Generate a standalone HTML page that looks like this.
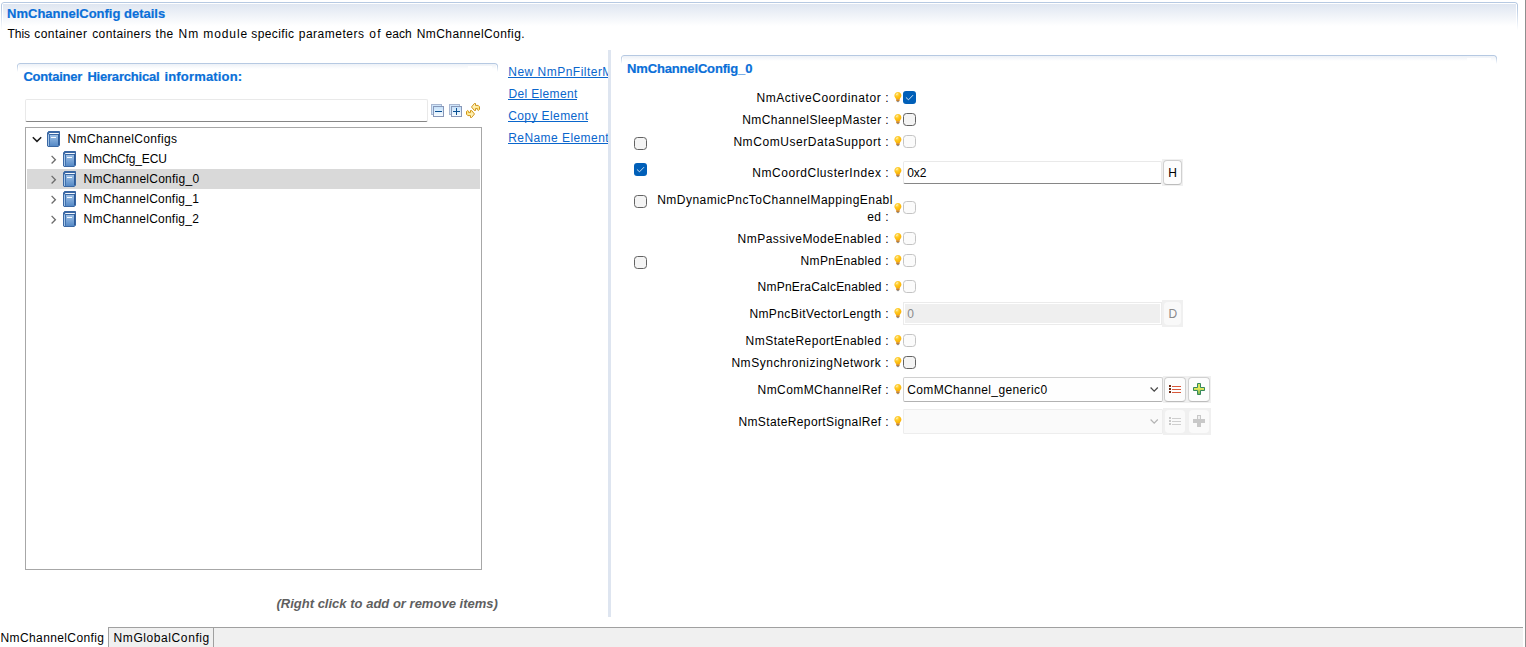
<!DOCTYPE html>
<html lang="en"><head><meta charset="utf-8"><title>NmChannelConfig details</title>
<style>
html,body{margin:0;padding:0;background:#fff;}
body{width:1526px;height:647px;overflow:hidden;position:relative;font-family:"Liberation Sans", sans-serif;font-size:12.0px;color:#000;}
.x{position:absolute;white-space:pre;line-height:16px;height:16px;margin:0;padding:0;}
.h{font-weight:bold;font-size:13.0px;color:#0a6fd8;-webkit-text-stroke:0.2px #0a6fd8;}
.t{color:#000;}
.dis{color:#8a8a8a;}
.a{color:#0a66cc;text-decoration:none;}
.hint{font-weight:bold;font-style:italic;font-size:13.0px;color:#5f5f5f;}
.para{margin:0;padding:0;position:static;}
.b{position:absolute;box-sizing:border-box;}
.i{position:absolute;display:block;overflow:visible;}

</style></head><body>
<div class="b" style="left:1525px;top:0;width:1px;height:647px;background:#8f8f8f"></div>
<div class="b" style="left:3px;top:4px;width:1513px;height:22px;background:linear-gradient(#dfe6f1,#ffffff)"></div>
<div class="b" style="left:1px;top:2px;width:1517px;height:28px;border:1px solid #b6c9e2;border-bottom:none;border-radius:3px 3px 0 0;-webkit-mask-image:linear-gradient(#000 0,#000 20%,transparent 100%);mask-image:linear-gradient(#000 0,#000 20%,transparent 100%)"></div>
<div class="b" style="left:19px;top:64px;width:477px;height:5px;background:linear-gradient(#edf1f7,#ffffff)"></div>
<div class="b" style="left:17px;top:63px;width:481px;height:9px;border:1px solid #b6c9e2;border-bottom:none;border-radius:3px 3px 0 0;-webkit-mask-image:linear-gradient(#000 0,#000 25%,transparent 100%);mask-image:linear-gradient(#000 0,#000 25%,transparent 100%)"></div>
<div class="b" style="left:468px;top:66px;width:24px;height:3px;background:#fff"></div>
<div class="b" style="left:25px;top:99px;width:403px;height:23px;border:1px solid #e9e9e9;border-bottom:1px solid #868686;border-radius:2px;background:#fff"></div>
<svg class="i" style="left:431px;top:104px" width="13" height="13" viewBox="0 0 13 13" shape-rendering="crispEdges"><defs><linearGradient id="ci431" x1="0" y1="0" x2="0" y2="1"><stop offset="0" stop-color="#c3e0fa"/><stop offset="1" stop-color="#fafdff"/></linearGradient></defs><rect x="0.5" y="0.5" width="10" height="10" fill="#cfe6fb" stroke="#a9b7d1"/><rect x="2.5" y="2.5" width="10" height="10" fill="url(#ci431)" stroke="#8797b8"/><rect x="4" y="7" width="7" height="1" fill="#0a4f92"/></svg>
<svg class="i" style="left:449px;top:104px" width="13" height="13" viewBox="0 0 13 13" shape-rendering="crispEdges"><defs><linearGradient id="ci449" x1="0" y1="0" x2="0" y2="1"><stop offset="0" stop-color="#c3e0fa"/><stop offset="1" stop-color="#fafdff"/></linearGradient></defs><rect x="0.5" y="0.5" width="10" height="10" fill="#cfe6fb" stroke="#a9b7d1"/><rect x="2.5" y="2.5" width="10" height="10" fill="url(#ci449)" stroke="#8797b8"/><rect x="4" y="7" width="7" height="1" fill="#0a4f92"/><rect x="7" y="4" width="1" height="7" fill="#0a4f92"/></svg>
<svg class="i" style="left:465px;top:102px" width="16" height="17" viewBox="0 0 16 17"><defs><linearGradient id="rf" x1="0" y1="0" x2="1" y2="1"><stop offset="0" stop-color="#fffbe0"/><stop offset="1" stop-color="#ffdf6a"/></linearGradient></defs><g fill="url(#rf)" stroke="#c98a06" stroke-width="0.9" stroke-linejoin="miter"><path d="M6.5 5 L9.4 1.5 L10.5 1.5 L10.5 3.4 L13.2 3.4 L14.5 4.8 L14.5 7.4 L13.4 8.5 L12.4 7.6 L12.4 6.6 L10.5 6.6 L10.5 8.5 L9.4 8.5 Z"/><path d="M6.5 5 L9.4 1.5 L10.5 1.5 L10.5 3.4 L13.2 3.4 L14.5 4.8 L14.5 7.4 L13.4 8.5 L12.4 7.6 L12.4 6.6 L10.5 6.6 L10.5 8.5 L9.4 8.5 Z" transform="rotate(180 8 8.5)"/></g></svg>
<div class="b" style="left:25px;top:127px;width:457px;height:443px;border:1px solid #a7a7a7;background:#fff"></div>
<div class="b" style="left:27px;top:169px;width:453px;height:20px;background:#d9d9d9"></div>
<svg class="i" style="left:32.3px;top:135.9px" width="10" height="7" viewBox="0 0 10 7"><path d="M0.8 1.2 L5 5.4 L9.2 1.2" fill="none" stroke="#1c1c1c" stroke-width="1.5"/></svg>
<svg class="i" style="left:47px;top:131px" width="13" height="16" viewBox="0 0 13 16"><defs><linearGradient id="bk47_131" x1="0" y1="0" x2="0" y2="1"><stop offset="0" stop-color="#9dc0e6"/><stop offset="1" stop-color="#5589c6"/></linearGradient></defs><path d="M1.6 0.5 H12.5 V14.2 L11.3 15.5 H1 L0.5 15 V1.8 Z" fill="#6a98cd" stroke="#3b68a4" stroke-width="1"/><rect x="1" y="2" width="11" height="2" fill="#3a67a3"/><rect x="1" y="0.6" width="11.4" height="1.6" fill="#3b68a4"/><rect x="3" y="4" width="8" height="11" fill="url(#bk47_131)"/><rect x="1" y="3.4" width="1" height="11.4" fill="#a5c6e8"/><rect x="2" y="3.4" width="1" height="11.4" fill="#3f70ae"/><rect x="2.2" y="2" width="9.6" height="1" fill="#f6f9fd"/><rect x="4" y="6" width="5" height="1" fill="#f6f9fd"/><rect x="11" y="3" width="1.2" height="11.4" fill="#2f5c98"/></svg>
<svg class="i" style="left:50px;top:154.8px" width="7" height="10" viewBox="0 0 7 10"><path d="M1.6 0.9 L5.4 4.7 L1.6 8.5" fill="none" stroke="#6c6c6c" stroke-width="1.3"/></svg>
<svg class="i" style="left:63px;top:151px" width="13" height="16" viewBox="0 0 13 16"><defs><linearGradient id="bk63_151" x1="0" y1="0" x2="0" y2="1"><stop offset="0" stop-color="#9dc0e6"/><stop offset="1" stop-color="#5589c6"/></linearGradient></defs><path d="M1.6 0.5 H12.5 V14.2 L11.3 15.5 H1 L0.5 15 V1.8 Z" fill="#6a98cd" stroke="#3b68a4" stroke-width="1"/><rect x="1" y="2" width="11" height="2" fill="#3a67a3"/><rect x="1" y="0.6" width="11.4" height="1.6" fill="#3b68a4"/><rect x="3" y="4" width="8" height="11" fill="url(#bk63_151)"/><rect x="1" y="3.4" width="1" height="11.4" fill="#a5c6e8"/><rect x="2" y="3.4" width="1" height="11.4" fill="#3f70ae"/><rect x="2.2" y="2" width="9.6" height="1" fill="#f6f9fd"/><rect x="4" y="6" width="5" height="1" fill="#f6f9fd"/><rect x="11" y="3" width="1.2" height="11.4" fill="#2f5c98"/></svg>
<svg class="i" style="left:50px;top:174.8px" width="7" height="10" viewBox="0 0 7 10"><path d="M1.6 0.9 L5.4 4.7 L1.6 8.5" fill="none" stroke="#6c6c6c" stroke-width="1.3"/></svg>
<svg class="i" style="left:63px;top:171px" width="13" height="16" viewBox="0 0 13 16"><defs><linearGradient id="bk63_171" x1="0" y1="0" x2="0" y2="1"><stop offset="0" stop-color="#9dc0e6"/><stop offset="1" stop-color="#5589c6"/></linearGradient></defs><path d="M1.6 0.5 H12.5 V14.2 L11.3 15.5 H1 L0.5 15 V1.8 Z" fill="#6a98cd" stroke="#3b68a4" stroke-width="1"/><rect x="1" y="2" width="11" height="2" fill="#3a67a3"/><rect x="1" y="0.6" width="11.4" height="1.6" fill="#3b68a4"/><rect x="3" y="4" width="8" height="11" fill="url(#bk63_171)"/><rect x="1" y="3.4" width="1" height="11.4" fill="#a5c6e8"/><rect x="2" y="3.4" width="1" height="11.4" fill="#3f70ae"/><rect x="2.2" y="2" width="9.6" height="1" fill="#f6f9fd"/><rect x="4" y="6" width="5" height="1" fill="#f6f9fd"/><rect x="11" y="3" width="1.2" height="11.4" fill="#2f5c98"/></svg>
<svg class="i" style="left:50px;top:194.8px" width="7" height="10" viewBox="0 0 7 10"><path d="M1.6 0.9 L5.4 4.7 L1.6 8.5" fill="none" stroke="#6c6c6c" stroke-width="1.3"/></svg>
<svg class="i" style="left:63px;top:191px" width="13" height="16" viewBox="0 0 13 16"><defs><linearGradient id="bk63_191" x1="0" y1="0" x2="0" y2="1"><stop offset="0" stop-color="#9dc0e6"/><stop offset="1" stop-color="#5589c6"/></linearGradient></defs><path d="M1.6 0.5 H12.5 V14.2 L11.3 15.5 H1 L0.5 15 V1.8 Z" fill="#6a98cd" stroke="#3b68a4" stroke-width="1"/><rect x="1" y="2" width="11" height="2" fill="#3a67a3"/><rect x="1" y="0.6" width="11.4" height="1.6" fill="#3b68a4"/><rect x="3" y="4" width="8" height="11" fill="url(#bk63_191)"/><rect x="1" y="3.4" width="1" height="11.4" fill="#a5c6e8"/><rect x="2" y="3.4" width="1" height="11.4" fill="#3f70ae"/><rect x="2.2" y="2" width="9.6" height="1" fill="#f6f9fd"/><rect x="4" y="6" width="5" height="1" fill="#f6f9fd"/><rect x="11" y="3" width="1.2" height="11.4" fill="#2f5c98"/></svg>
<svg class="i" style="left:50px;top:214.8px" width="7" height="10" viewBox="0 0 7 10"><path d="M1.6 0.9 L5.4 4.7 L1.6 8.5" fill="none" stroke="#6c6c6c" stroke-width="1.3"/></svg>
<svg class="i" style="left:63px;top:211px" width="13" height="16" viewBox="0 0 13 16"><defs><linearGradient id="bk63_211" x1="0" y1="0" x2="0" y2="1"><stop offset="0" stop-color="#9dc0e6"/><stop offset="1" stop-color="#5589c6"/></linearGradient></defs><path d="M1.6 0.5 H12.5 V14.2 L11.3 15.5 H1 L0.5 15 V1.8 Z" fill="#6a98cd" stroke="#3b68a4" stroke-width="1"/><rect x="1" y="2" width="11" height="2" fill="#3a67a3"/><rect x="1" y="0.6" width="11.4" height="1.6" fill="#3b68a4"/><rect x="3" y="4" width="8" height="11" fill="url(#bk63_211)"/><rect x="1" y="3.4" width="1" height="11.4" fill="#a5c6e8"/><rect x="2" y="3.4" width="1" height="11.4" fill="#3f70ae"/><rect x="2.2" y="2" width="9.6" height="1" fill="#f6f9fd"/><rect x="4" y="6" width="5" height="1" fill="#f6f9fd"/><rect x="11" y="3" width="1.2" height="11.4" fill="#2f5c98"/></svg>
<div class="b" style="left:608px;top:50px;width:3px;height:567px;background:#dee5f0"></div>
<div class="b" style="left:623px;top:56px;width:873px;height:5px;background:linear-gradient(#edf1f7,#ffffff)"></div>
<div class="b" style="left:621px;top:55px;width:876px;height:9px;border:1px solid #b6c9e2;border-bottom:none;border-radius:3px 3px 0 0;-webkit-mask-image:linear-gradient(#000 0,#000 25%,transparent 100%);mask-image:linear-gradient(#000 0,#000 25%,transparent 100%)"></div>
<div class="b" style="left:1467px;top:58px;width:24px;height:3px;background:#fff"></div>
<svg class="i" style="left:894px;top:92px" width="8" height="11" viewBox="0 0 8 11"><defs><radialGradient id="bg894_92" cx="0.38" cy="0.28" r="0.75"><stop offset="0" stop-color="#ffe27a"/><stop offset="0.45" stop-color="#ffc71c"/><stop offset="1" stop-color="#f9ab00"/></radialGradient></defs><path d="M3.9 0.1 C1.9 0.1 0.4 1.7 0.4 3.6 C0.4 5 1.3 5.8 2 6.9 L2.2 7.6 L5.6 7.6 L5.8 6.9 C6.5 5.8 7.4 5 7.4 3.6 C7.4 1.7 5.9 0.1 3.9 0.1 Z" fill="url(#bg894_92)"/><path d="M2.5 2.9 L3.5 1.7" stroke="#fff6cf" stroke-width="0.8" stroke-linecap="round"/><rect x="2.2" y="7.3" width="3.4" height="1.9" fill="#c9822a"/><rect x="2.9" y="9.1" width="2" height="1" fill="#8a8a8a"/></svg>
<svg class="i" style="left:903px;top:91px" width="13" height="13" viewBox="0 0 13 13"><rect x="0" y="0" width="13" height="13" rx="3" fill="#005fb8"/><path d="M3.2 6.7 L5.5 8.8 L9.8 4.4" fill="none" stroke="#fff" stroke-opacity="0.92" stroke-width="0.85" stroke-linecap="round" stroke-linejoin="round"/></svg>
<svg class="i" style="left:894px;top:114px" width="8" height="11" viewBox="0 0 8 11"><defs><radialGradient id="bg894_114" cx="0.38" cy="0.28" r="0.75"><stop offset="0" stop-color="#ffe27a"/><stop offset="0.45" stop-color="#ffc71c"/><stop offset="1" stop-color="#f9ab00"/></radialGradient></defs><path d="M3.9 0.1 C1.9 0.1 0.4 1.7 0.4 3.6 C0.4 5 1.3 5.8 2 6.9 L2.2 7.6 L5.6 7.6 L5.8 6.9 C6.5 5.8 7.4 5 7.4 3.6 C7.4 1.7 5.9 0.1 3.9 0.1 Z" fill="url(#bg894_114)"/><path d="M2.5 2.9 L3.5 1.7" stroke="#fff6cf" stroke-width="0.8" stroke-linecap="round"/><rect x="2.2" y="7.3" width="3.4" height="1.9" fill="#c9822a"/><rect x="2.9" y="9.1" width="2" height="1" fill="#8a8a8a"/></svg>
<svg class="i" style="left:903px;top:113px" width="13" height="13" viewBox="0 0 13 13"><rect x="0.5" y="0.5" width="12" height="12" rx="3" fill="#f4f4f4" stroke="#626262"/></svg>
<svg class="i" style="left:894px;top:136px" width="8" height="11" viewBox="0 0 8 11"><defs><radialGradient id="bg894_136" cx="0.38" cy="0.28" r="0.75"><stop offset="0" stop-color="#ffe27a"/><stop offset="0.45" stop-color="#ffc71c"/><stop offset="1" stop-color="#f9ab00"/></radialGradient></defs><path d="M3.9 0.1 C1.9 0.1 0.4 1.7 0.4 3.6 C0.4 5 1.3 5.8 2 6.9 L2.2 7.6 L5.6 7.6 L5.8 6.9 C6.5 5.8 7.4 5 7.4 3.6 C7.4 1.7 5.9 0.1 3.9 0.1 Z" fill="url(#bg894_136)"/><path d="M2.5 2.9 L3.5 1.7" stroke="#fff6cf" stroke-width="0.8" stroke-linecap="round"/><rect x="2.2" y="7.3" width="3.4" height="1.9" fill="#c9822a"/><rect x="2.9" y="9.1" width="2" height="1" fill="#8a8a8a"/></svg>
<svg class="i" style="left:903px;top:135px" width="13" height="13" viewBox="0 0 13 13"><rect x="0.5" y="0.5" width="12" height="12" rx="3" fill="#fbfbfb" stroke="#c4c4c4"/></svg>
<svg class="i" style="left:894px;top:203px" width="8" height="11" viewBox="0 0 8 11"><defs><radialGradient id="bg894_203" cx="0.38" cy="0.28" r="0.75"><stop offset="0" stop-color="#ffe27a"/><stop offset="0.45" stop-color="#ffc71c"/><stop offset="1" stop-color="#f9ab00"/></radialGradient></defs><path d="M3.9 0.1 C1.9 0.1 0.4 1.7 0.4 3.6 C0.4 5 1.3 5.8 2 6.9 L2.2 7.6 L5.6 7.6 L5.8 6.9 C6.5 5.8 7.4 5 7.4 3.6 C7.4 1.7 5.9 0.1 3.9 0.1 Z" fill="url(#bg894_203)"/><path d="M2.5 2.9 L3.5 1.7" stroke="#fff6cf" stroke-width="0.8" stroke-linecap="round"/><rect x="2.2" y="7.3" width="3.4" height="1.9" fill="#c9822a"/><rect x="2.9" y="9.1" width="2" height="1" fill="#8a8a8a"/></svg>
<svg class="i" style="left:903px;top:201px" width="13" height="13" viewBox="0 0 13 13"><rect x="0.5" y="0.5" width="12" height="12" rx="3" fill="#fbfbfb" stroke="#c4c4c4"/></svg>
<svg class="i" style="left:894px;top:233px" width="8" height="11" viewBox="0 0 8 11"><defs><radialGradient id="bg894_233" cx="0.38" cy="0.28" r="0.75"><stop offset="0" stop-color="#ffe27a"/><stop offset="0.45" stop-color="#ffc71c"/><stop offset="1" stop-color="#f9ab00"/></radialGradient></defs><path d="M3.9 0.1 C1.9 0.1 0.4 1.7 0.4 3.6 C0.4 5 1.3 5.8 2 6.9 L2.2 7.6 L5.6 7.6 L5.8 6.9 C6.5 5.8 7.4 5 7.4 3.6 C7.4 1.7 5.9 0.1 3.9 0.1 Z" fill="url(#bg894_233)"/><path d="M2.5 2.9 L3.5 1.7" stroke="#fff6cf" stroke-width="0.8" stroke-linecap="round"/><rect x="2.2" y="7.3" width="3.4" height="1.9" fill="#c9822a"/><rect x="2.9" y="9.1" width="2" height="1" fill="#8a8a8a"/></svg>
<svg class="i" style="left:903px;top:232px" width="13" height="13" viewBox="0 0 13 13"><rect x="0.5" y="0.5" width="12" height="12" rx="3" fill="#fbfbfb" stroke="#c4c4c4"/></svg>
<svg class="i" style="left:894px;top:255px" width="8" height="11" viewBox="0 0 8 11"><defs><radialGradient id="bg894_255" cx="0.38" cy="0.28" r="0.75"><stop offset="0" stop-color="#ffe27a"/><stop offset="0.45" stop-color="#ffc71c"/><stop offset="1" stop-color="#f9ab00"/></radialGradient></defs><path d="M3.9 0.1 C1.9 0.1 0.4 1.7 0.4 3.6 C0.4 5 1.3 5.8 2 6.9 L2.2 7.6 L5.6 7.6 L5.8 6.9 C6.5 5.8 7.4 5 7.4 3.6 C7.4 1.7 5.9 0.1 3.9 0.1 Z" fill="url(#bg894_255)"/><path d="M2.5 2.9 L3.5 1.7" stroke="#fff6cf" stroke-width="0.8" stroke-linecap="round"/><rect x="2.2" y="7.3" width="3.4" height="1.9" fill="#c9822a"/><rect x="2.9" y="9.1" width="2" height="1" fill="#8a8a8a"/></svg>
<svg class="i" style="left:903px;top:254px" width="13" height="13" viewBox="0 0 13 13"><rect x="0.5" y="0.5" width="12" height="12" rx="3" fill="#fbfbfb" stroke="#c4c4c4"/></svg>
<svg class="i" style="left:894px;top:281px" width="8" height="11" viewBox="0 0 8 11"><defs><radialGradient id="bg894_281" cx="0.38" cy="0.28" r="0.75"><stop offset="0" stop-color="#ffe27a"/><stop offset="0.45" stop-color="#ffc71c"/><stop offset="1" stop-color="#f9ab00"/></radialGradient></defs><path d="M3.9 0.1 C1.9 0.1 0.4 1.7 0.4 3.6 C0.4 5 1.3 5.8 2 6.9 L2.2 7.6 L5.6 7.6 L5.8 6.9 C6.5 5.8 7.4 5 7.4 3.6 C7.4 1.7 5.9 0.1 3.9 0.1 Z" fill="url(#bg894_281)"/><path d="M2.5 2.9 L3.5 1.7" stroke="#fff6cf" stroke-width="0.8" stroke-linecap="round"/><rect x="2.2" y="7.3" width="3.4" height="1.9" fill="#c9822a"/><rect x="2.9" y="9.1" width="2" height="1" fill="#8a8a8a"/></svg>
<svg class="i" style="left:903px;top:280px" width="13" height="13" viewBox="0 0 13 13"><rect x="0.5" y="0.5" width="12" height="12" rx="3" fill="#fbfbfb" stroke="#c4c4c4"/></svg>
<svg class="i" style="left:894px;top:335px" width="8" height="11" viewBox="0 0 8 11"><defs><radialGradient id="bg894_335" cx="0.38" cy="0.28" r="0.75"><stop offset="0" stop-color="#ffe27a"/><stop offset="0.45" stop-color="#ffc71c"/><stop offset="1" stop-color="#f9ab00"/></radialGradient></defs><path d="M3.9 0.1 C1.9 0.1 0.4 1.7 0.4 3.6 C0.4 5 1.3 5.8 2 6.9 L2.2 7.6 L5.6 7.6 L5.8 6.9 C6.5 5.8 7.4 5 7.4 3.6 C7.4 1.7 5.9 0.1 3.9 0.1 Z" fill="url(#bg894_335)"/><path d="M2.5 2.9 L3.5 1.7" stroke="#fff6cf" stroke-width="0.8" stroke-linecap="round"/><rect x="2.2" y="7.3" width="3.4" height="1.9" fill="#c9822a"/><rect x="2.9" y="9.1" width="2" height="1" fill="#8a8a8a"/></svg>
<svg class="i" style="left:903px;top:334px" width="13" height="13" viewBox="0 0 13 13"><rect x="0.5" y="0.5" width="12" height="12" rx="3" fill="#fbfbfb" stroke="#c4c4c4"/></svg>
<svg class="i" style="left:894px;top:357px" width="8" height="11" viewBox="0 0 8 11"><defs><radialGradient id="bg894_357" cx="0.38" cy="0.28" r="0.75"><stop offset="0" stop-color="#ffe27a"/><stop offset="0.45" stop-color="#ffc71c"/><stop offset="1" stop-color="#f9ab00"/></radialGradient></defs><path d="M3.9 0.1 C1.9 0.1 0.4 1.7 0.4 3.6 C0.4 5 1.3 5.8 2 6.9 L2.2 7.6 L5.6 7.6 L5.8 6.9 C6.5 5.8 7.4 5 7.4 3.6 C7.4 1.7 5.9 0.1 3.9 0.1 Z" fill="url(#bg894_357)"/><path d="M2.5 2.9 L3.5 1.7" stroke="#fff6cf" stroke-width="0.8" stroke-linecap="round"/><rect x="2.2" y="7.3" width="3.4" height="1.9" fill="#c9822a"/><rect x="2.9" y="9.1" width="2" height="1" fill="#8a8a8a"/></svg>
<svg class="i" style="left:903px;top:356px" width="13" height="13" viewBox="0 0 13 13"><rect x="0.5" y="0.5" width="12" height="12" rx="3" fill="#f4f4f4" stroke="#626262"/></svg>
<svg class="i" style="left:894px;top:167px" width="8" height="11" viewBox="0 0 8 11"><defs><radialGradient id="bg894_167" cx="0.38" cy="0.28" r="0.75"><stop offset="0" stop-color="#ffe27a"/><stop offset="0.45" stop-color="#ffc71c"/><stop offset="1" stop-color="#f9ab00"/></radialGradient></defs><path d="M3.9 0.1 C1.9 0.1 0.4 1.7 0.4 3.6 C0.4 5 1.3 5.8 2 6.9 L2.2 7.6 L5.6 7.6 L5.8 6.9 C6.5 5.8 7.4 5 7.4 3.6 C7.4 1.7 5.9 0.1 3.9 0.1 Z" fill="url(#bg894_167)"/><path d="M2.5 2.9 L3.5 1.7" stroke="#fff6cf" stroke-width="0.8" stroke-linecap="round"/><rect x="2.2" y="7.3" width="3.4" height="1.9" fill="#c9822a"/><rect x="2.9" y="9.1" width="2" height="1" fill="#8a8a8a"/></svg>
<svg class="i" style="left:894px;top:308px" width="8" height="11" viewBox="0 0 8 11"><defs><radialGradient id="bg894_308" cx="0.38" cy="0.28" r="0.75"><stop offset="0" stop-color="#ffe27a"/><stop offset="0.45" stop-color="#ffc71c"/><stop offset="1" stop-color="#f9ab00"/></radialGradient></defs><path d="M3.9 0.1 C1.9 0.1 0.4 1.7 0.4 3.6 C0.4 5 1.3 5.8 2 6.9 L2.2 7.6 L5.6 7.6 L5.8 6.9 C6.5 5.8 7.4 5 7.4 3.6 C7.4 1.7 5.9 0.1 3.9 0.1 Z" fill="url(#bg894_308)"/><path d="M2.5 2.9 L3.5 1.7" stroke="#fff6cf" stroke-width="0.8" stroke-linecap="round"/><rect x="2.2" y="7.3" width="3.4" height="1.9" fill="#c9822a"/><rect x="2.9" y="9.1" width="2" height="1" fill="#8a8a8a"/></svg>
<svg class="i" style="left:894px;top:384px" width="8" height="11" viewBox="0 0 8 11"><defs><radialGradient id="bg894_384" cx="0.38" cy="0.28" r="0.75"><stop offset="0" stop-color="#ffe27a"/><stop offset="0.45" stop-color="#ffc71c"/><stop offset="1" stop-color="#f9ab00"/></radialGradient></defs><path d="M3.9 0.1 C1.9 0.1 0.4 1.7 0.4 3.6 C0.4 5 1.3 5.8 2 6.9 L2.2 7.6 L5.6 7.6 L5.8 6.9 C6.5 5.8 7.4 5 7.4 3.6 C7.4 1.7 5.9 0.1 3.9 0.1 Z" fill="url(#bg894_384)"/><path d="M2.5 2.9 L3.5 1.7" stroke="#fff6cf" stroke-width="0.8" stroke-linecap="round"/><rect x="2.2" y="7.3" width="3.4" height="1.9" fill="#c9822a"/><rect x="2.9" y="9.1" width="2" height="1" fill="#8a8a8a"/></svg>
<svg class="i" style="left:894px;top:416px" width="8" height="11" viewBox="0 0 8 11"><defs><radialGradient id="bg894_416" cx="0.38" cy="0.28" r="0.75"><stop offset="0" stop-color="#ffe27a"/><stop offset="0.45" stop-color="#ffc71c"/><stop offset="1" stop-color="#f9ab00"/></radialGradient></defs><path d="M3.9 0.1 C1.9 0.1 0.4 1.7 0.4 3.6 C0.4 5 1.3 5.8 2 6.9 L2.2 7.6 L5.6 7.6 L5.8 6.9 C6.5 5.8 7.4 5 7.4 3.6 C7.4 1.7 5.9 0.1 3.9 0.1 Z" fill="url(#bg894_416)"/><path d="M2.5 2.9 L3.5 1.7" stroke="#fff6cf" stroke-width="0.8" stroke-linecap="round"/><rect x="2.2" y="7.3" width="3.4" height="1.9" fill="#c9822a"/><rect x="2.9" y="9.1" width="2" height="1" fill="#8a8a8a"/></svg>
<svg class="i" style="left:634px;top:137px" width="13" height="13" viewBox="0 0 13 13"><rect x="0.5" y="0.5" width="12" height="12" rx="3" fill="#f4f4f4" stroke="#626262"/></svg>
<svg class="i" style="left:634px;top:163px" width="13" height="13" viewBox="0 0 13 13"><rect x="0" y="0" width="13" height="13" rx="3" fill="#005fb8"/><path d="M3.2 6.7 L5.5 8.8 L9.8 4.4" fill="none" stroke="#fff" stroke-opacity="0.92" stroke-width="0.85" stroke-linecap="round" stroke-linejoin="round"/></svg>
<svg class="i" style="left:634px;top:195px" width="13" height="13" viewBox="0 0 13 13"><rect x="0.5" y="0.5" width="12" height="12" rx="3" fill="#f4f4f4" stroke="#626262"/></svg>
<svg class="i" style="left:634px;top:256px" width="13" height="13" viewBox="0 0 13 13"><rect x="0.5" y="0.5" width="12" height="12" rx="3" fill="#f4f4f4" stroke="#626262"/></svg>
<div class="b" style="left:903px;top:161px;width:259px;height:23px;border:1px solid #e9e9e9;border-bottom:1px solid #868686;border-radius:2px;background:#fff"></div>
<div class="b" style="left:1162px;top:159px;width:21px;height:27px;background:#f0f0f0"></div>
<div class="b" style="left:1163px;top:160px;width:19px;height:25px;border:1px solid #d0d0d0;border-bottom-color:#bcbcbc;border-radius:4px;background:#fdfdfd"></div>
<div class="b" style="left:903px;top:302px;width:259px;height:23px;border:1px solid #ebebeb;background:#fff"></div>
<div class="b" style="left:905px;top:304px;width:255px;height:19px;background:#efefef"></div>
<div class="b" style="left:1162px;top:300px;width:21px;height:27px;background:#f0f0f0"></div>
<div class="b" style="left:1164px;top:302px;width:17px;height:23px;border-radius:4px;background:#f9f9f9"></div>
<div class="b" style="left:903px;top:377px;width:260px;height:25px;border:1px solid #d0d0d0;border-bottom-color:#b2b2b2;border-radius:2px;background:#fefefe"></div>
<svg class="i" style="left:1149.9px;top:387.4px" width="9" height="5" viewBox="0 0 9 5"><path d="M0.6 0.5 L4.2 4.1 L7.8 0.5" fill="none" stroke="#484848" stroke-width="1.25"/></svg>
<div class="b" style="left:1163px;top:376px;width:48px;height:27px;background:#f0f0f0"></div>
<div class="b" style="left:1164px;top:377px;width:22px;height:25px;border:1px solid #d0d0d0;border-bottom-color:#bcbcbc;border-radius:4px;background:#fdfdfd"></div>
<div class="b" style="left:1188px;top:377px;width:22px;height:25px;border:1px solid #d0d0d0;border-bottom-color:#bcbcbc;border-radius:4px;background:#fdfdfd"></div>
<svg class="i" style="left:1169px;top:384.5px" width="12" height="8" viewBox="0 0 12 8" shape-rendering="crispEdges"><rect x="0" y="0" width="2" height="2" fill="#6d2a12"/><rect x="3" y="0.5" width="9" height="1" fill="#d9583a"/><rect x="0" y="3" width="2" height="2" fill="#6d2a12"/><rect x="3" y="3.5" width="9" height="1" fill="#d9583a"/><rect x="0" y="6" width="2" height="2" fill="#6d2a12"/><rect x="3" y="6.5" width="9" height="1" fill="#d9583a"/></svg>
<svg class="i" style="left:1193px;top:383px" width="12" height="12" viewBox="0 0 12 12"><defs><linearGradient id="pg1193" x1="0" y1="0" x2="0" y2="1"><stop offset="0" stop-color="#c8e060"/><stop offset="0.45" stop-color="#e4e85a"/><stop offset="1" stop-color="#6fae50"/></linearGradient></defs><path d="M4.5 0.5 H7.5 V4.5 H11.5 V7.5 H7.5 V11.5 H4.5 V7.5 H0.5 V4.5 H4.5 Z" fill="url(#pg1193)" stroke="#35895a" stroke-width="1"/></svg>
<div class="b" style="left:903px;top:409px;width:260px;height:25px;border:1px solid #ededed;border-radius:1px;background:#fafafa"></div>
<svg class="i" style="left:1149.9px;top:419.4px" width="9" height="5" viewBox="0 0 9 5"><path d="M0.6 0.5 L4.2 4.1 L7.8 0.5" fill="none" stroke="#b4b4b4" stroke-width="1.25"/></svg>
<div class="b" style="left:1163px;top:408px;width:48px;height:27px;background:#f0f0f0"></div>
<div class="b" style="left:1165px;top:410px;width:20px;height:23px;border-radius:4px;background:#fafafa"></div>
<div class="b" style="left:1189px;top:410px;width:20px;height:23px;border-radius:4px;background:#fafafa"></div>
<svg class="i" style="left:1169px;top:416.5px" width="12" height="8" viewBox="0 0 12 8" shape-rendering="crispEdges"><rect x="0" y="0" width="2" height="2" fill="#c9c9c9"/><rect x="3" y="0.5" width="9" height="1" fill="#cfcfcf"/><rect x="0" y="3" width="2" height="2" fill="#c9c9c9"/><rect x="3" y="3.5" width="9" height="1" fill="#cfcfcf"/><rect x="0" y="6" width="2" height="2" fill="#c9c9c9"/><rect x="3" y="6.5" width="9" height="1" fill="#cfcfcf"/></svg>
<svg class="i" style="left:1193px;top:415px" width="12" height="12" viewBox="0 0 12 12" shape-rendering="crispEdges"><path d="M4 0 H8 V4 H12 V8 H8 V12 H4 V8 H0 V4 H4 Z" fill="#c8c8c8"/><rect x="5" y="1" width="2" height="3" fill="#efefef"/></svg>
<div class="b" style="left:0;top:627px;width:1523px;height:20px;background:#f0f0f0;border-top:1px solid #a0a0a0"></div>
<div class="b" style="left:0;top:627px;width:108px;height:20px;background:#fff"></div>
<div class="b" style="left:108px;top:627px;width:1px;height:20px;background:#a0a0a0"></div>
<div class="b" style="left:213px;top:627px;width:1px;height:20px;background:#a0a0a0"></div>
<div id="t0" class="x h" style="left:7.10px;top:6px;letter-spacing:-0.006px;">NmChannelConfig details</div>
<p class="para">
<span id="t1" class="x t" style="left:7.46px;top:26px;letter-spacing:-0.012px;">This</span>
<span id="t2" class="x t" style="left:34.37px;top:26px;letter-spacing:0.396px;">container</span>
<span id="t3" class="x t" style="left:92.20px;top:26px;letter-spacing:0.390px;">containers</span>
<span id="t4" class="x t" style="left:155.60px;top:26px;letter-spacing:0.475px;">the</span>
<span id="t5" class="x t" style="left:178.60px;top:26px;letter-spacing:1.000px;">Nm</span>
<span id="t6" class="x t" style="left:203.20px;top:26px;letter-spacing:0.944px;">module</span>
<span id="t7" class="x t" style="left:251.36px;top:26px;letter-spacing:0.367px;">specific</span>
<span id="t8" class="x t" style="left:298.70px;top:26px;letter-spacing:0.515px;">parameters</span>
<span id="t9" class="x t" style="left:369.30px;top:26px;letter-spacing:1.300px;">of</span>
<span id="t10" class="x t" style="left:385.55px;top:26px;letter-spacing:0.020px;">each</span>
<span id="t11" class="x t" style="left:416.69px;top:26px;letter-spacing:0.438px;">NmChannelConfig.</span>
</p>
<h2 class="para">
<span id="t12" class="x h" style="left:23.40px;top:69px;letter-spacing:-0.211px;">Container</span>
<span id="t13" class="x h" style="left:87.40px;top:69px;letter-spacing:-0.203px;">Hierarchical</span>
<span id="t14" class="x h" style="left:164.50px;top:69px;letter-spacing:0.160px;">information:</span>
</h2>
<div id="t15" class="x h" style="left:627.10px;top:61px;letter-spacing:-0.159px;">NmChannelConfig_0</div>
<div id="t16" class="x t" style="left:67.60px;top:131px;letter-spacing:0.364px;">NmChannelConfigs</div>
<div id="t17" class="x t" style="left:83.59px;top:151px;letter-spacing:-0.132px;">NmChCfg_ECU</div>
<div id="t18" class="x t" style="left:83.59px;top:171px;letter-spacing:0.255px;">NmChannelConfig_0</div>
<div id="t19" class="x t" style="left:83.59px;top:191px;letter-spacing:0.243px;">NmChannelConfig_1</div>
<div id="t20" class="x t" style="left:83.59px;top:211px;letter-spacing:0.243px;">NmChannelConfig_2</div>
<div class="b" style="left:508px;top:64px;width:100px;height:16px;overflow:hidden"><a id="t21" class="x a" style="left:0.30px;top:0;letter-spacing:0.480px;">New NmPnFilterM</a></div>
<div class="b" style="left:508px;top:77px;width:100px;height:1px;background:#0a66cc"></div>
<a id="t22" class="x a" style="left:508.40px;top:86px;letter-spacing:0.352px;">Del Element</a>
<div class="b" style="left:508px;top:99px;width:69px;height:1px;background:#0a66cc"></div>
<a id="t23" class="x a" style="left:508.20px;top:108px;letter-spacing:0.407px;">Copy Element</a>
<div class="b" style="left:508px;top:121px;width:80px;height:1px;background:#0a66cc"></div>
<div class="b" style="left:508px;top:130px;width:100px;height:16px;overflow:hidden"><a id="t24" class="x a" style="left:0.20px;top:0;letter-spacing:0.438px;">ReName Element</a></div>
<div class="b" style="left:508px;top:143px;width:100px;height:1px;background:#0a66cc"></div>
<div id="t25" class="x hint" style="left:276.40px;top:596px;letter-spacing:0.012px;">(Right click to add or remove items)</div>
<div id="t26" class="x t" style="left:0.59px;top:630px;letter-spacing:0.380px;">NmChannelConfig</div>
<div id="t27" class="x t" style="left:113.59px;top:630px;letter-spacing:0.586px;">NmGlobalConfig</div>
<div id="t28" class="x t" style="left:756.40px;top:90px;letter-spacing:0.573px;">NmActiveCoordinator :</div>
<div id="t29" class="x t" style="left:742.20px;top:112px;letter-spacing:0.434px;">NmChannelSleepMaster :</div>
<div id="t30" class="x t" style="left:733.40px;top:134px;letter-spacing:0.562px;">NmComUserDataSupport :</div>
<div id="t31" class="x t" style="left:752.20px;top:165px;letter-spacing:0.556px;">NmCoordClusterIndex :</div>
<div id="t32" class="x t" style="left:657.20px;top:192px;letter-spacing:0.472px;">NmDynamicPncToChannelMappingEnabl</div>
<div id="t33" class="x t" style="left:867.20px;top:209px;letter-spacing:0.453px;">ed :</div>
<div id="t34" class="x t" style="left:737.59px;top:231px;letter-spacing:0.462px;">NmPassiveModeEnabled :</div>
<div id="t35" class="x t" style="left:800.59px;top:253px;letter-spacing:0.333px;">NmPnEnabled :</div>
<div id="t36" class="x t" style="left:757.59px;top:279px;letter-spacing:0.230px;">NmPnEraCalcEnabled :</div>
<div id="t37" class="x t" style="left:749.40px;top:306px;letter-spacing:0.402px;">NmPncBitVectorLength :</div>
<div id="t38" class="x t" style="left:745.59px;top:333px;letter-spacing:0.462px;">NmStateReportEnabled :</div>
<div id="t39" class="x t" style="left:731.40px;top:355px;letter-spacing:0.542px;">NmSynchronizingNetwork :</div>
<div id="t40" class="x t" style="left:757.59px;top:382px;letter-spacing:0.417px;">NmComMChannelRef :</div>
<div id="t41" class="x t" style="left:738.40px;top:414px;letter-spacing:0.382px;">NmStateReportSignalRef :</div>
<div id="t42" class="x t" style="left:907.20px;top:165px;letter-spacing:-0.068px;">0x2</div>
<div id="t43" class="x dis" style="left:907.33px;top:306px;">0</div>
<div id="t44" class="x t" style="left:907.20px;top:382px;letter-spacing:0.376px;">ComMChannel_generic0</div>
<div id="t45" class="x t" style="left:1168.30px;top:165px;">H</div>
<div id="t46" class="x dis" style="left:1168.40px;top:306px;">D</div>
</body></html>
